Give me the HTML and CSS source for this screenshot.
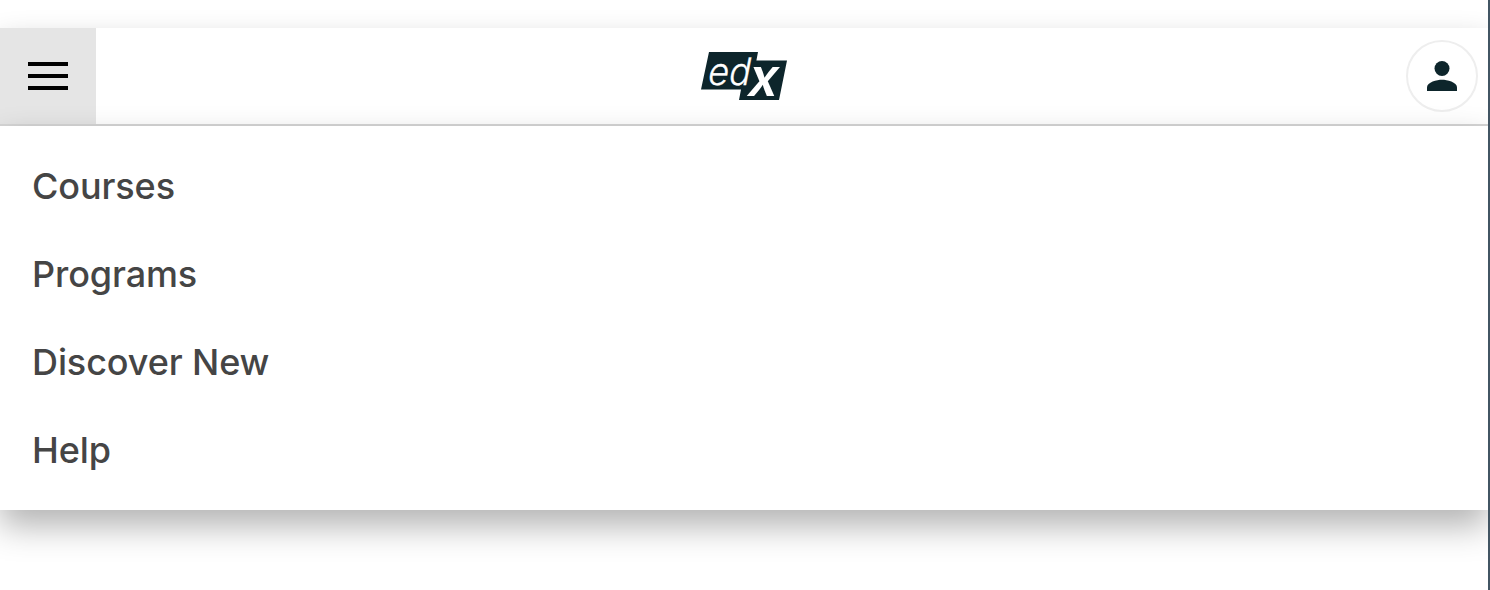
FILE: index.html
```html
<!DOCTYPE html>
<html lang="en">
<head>
<meta charset="utf-8">
<title>edX</title>
<link rel="stylesheet" href="styles.css">
</head>
<body>
<div class="page">
  <header class="header">
    <button class="menu-button" aria-label="Main menu">
      <svg width="40" height="28" viewBox="0 0 40 28"><path d="M0 0h40v4H0zM0 12h40v4H0zM0 24h40v4H0z"/></svg>
    </button>
    <a class="logo" aria-label="edX">
      <svg class="logo-mark" width="88" height="50" viewBox="0 0 88 50">
        <path fill="#0d252b" d="M9 1H58L56.400 9.500H87L79 49H39L41 38.500H1Z"/>
        <text class="logo-ed" transform="translate(6.300 34) skewX(-11)" textLength="42.500" lengthAdjust="spacingAndGlyphs">ed</text>
        <text class="logo-x" transform="translate(45.500 44.500) skewX(-12)" textLength="30" lengthAdjust="spacingAndGlyphs">x</text>
      </svg>
    </a>
    <button class="avatar" aria-label="Account">
      <svg width="30" height="30" viewBox="0 0 30 30"><circle cx="15" cy="7.5" r="7.5"/><path d="M0 30v-3.7C0 21.200 10 18.800 15 18.800s15 2.400 15 7.500V30z"/></svg>
    </button>
  </header>
  <nav class="menu">
    <a class="menu-link">Courses</a>
    <a class="menu-link">Programs</a>
    <a class="menu-link">Discover New</a>
    <a class="menu-link">Help</a>
  </nav>
</div>
</body>
</html>
```
FILE: styles.css
```css
* { box-sizing: border-box; }
body { margin: 0; background: #fff; font-family: Inter, "Liberation Sans", sans-serif; }
.page {
  height: 590px;
  padding-top: 28px;
  border-right: 2px solid #425563;
  overflow: hidden;
}
.header {
  display: grid;
  grid-template-columns: 1fr auto 1fr;
  align-items: center;
  height: 98px;
  background: #fff;
  border-bottom: 2px solid #d6d6d6;
  box-shadow: 0 16px 32px rgba(0, 0, 0, .3);
}
.menu-button {
  display: flex;
  align-items: center;
  justify-content: center;
  width: 96px;
  height: 96px;
  padding: 0;
  border: 0;
  background: #e5e5e5;
}
.logo { display: flex; }
.logo-mark { overflow: visible; }
.logo-ed { font: 300 38px Inter, sans-serif; fill: #fff; stroke: #fff; stroke-width: .3px; }
.logo-x { font: 600 53px Inter, sans-serif; fill: #fff; }
.avatar {
  display: flex;
  align-items: center;
  justify-content: center;
  justify-self: end;
  width: 72px;
  height: 72px;
  margin-right: 10px;
  padding: 0;
  border: 2px solid #eee;
  border-radius: 50%;
  background: #fff;
  fill: #0d252b;
}
.menu {
  display: flex;
  flex-direction: column;
  position: relative;
  height: 384px;
  padding: 16px 0;
  background: #fff;
  box-shadow: 0 16px 32px rgba(0, 0, 0, .3);
}
.menu-link {
  padding: 0 32px;
  font-size: 36px;
  font-weight: 500;
  line-height: 88px;
  letter-spacing: -.1px;
  color: #454545;
}
```
